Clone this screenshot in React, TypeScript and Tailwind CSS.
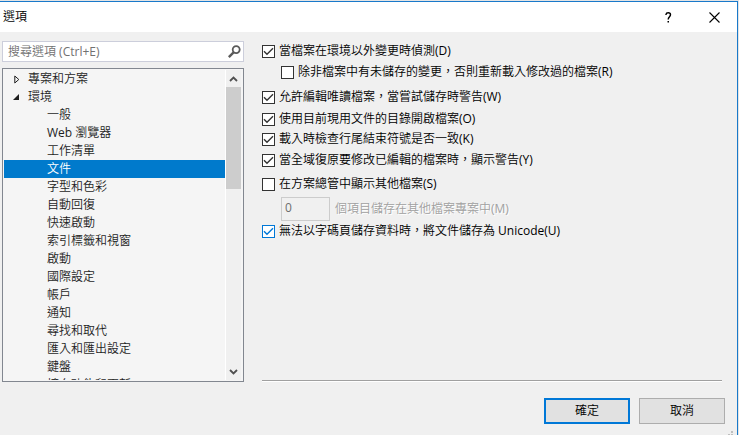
import { useState } from "react";
import clsx from "clsx";

const children = [
  "一般",
  "Web 瀏覽器",
  "工作清單",
  "文件",
  "字型和色彩",
  "自動回復",
  "快速啟動",
  "索引標籤和視窗",
  "啟動",
  "國際設定",
  "帳戶",
  "通知",
  "尋找和取代",
  "匯入和匯出設定",
  "鍵盤",
  "擴充功能和更新",
];

function TitleBar() {
  return (
    <header className="flex h-[30px] items-center bg-white pl-[3px] text-black">
      <h1 className="flex-1 text-xs">選項</h1>
      <button
        type="button"
        aria-label="說明"
        className="flex h-full w-[46px] items-center justify-center"
      >
        <svg width="7" height="11" viewBox="0 0 7 11" fill="none" stroke="#000">
          <path d="M1 3V2.4C1.2 1.2 2 .8 3.2.8C4.6.8 5.5 1.6 5.5 2.8C5.5 4.6 3.2 4.8 3.2 7.4" strokeWidth="1.4" />
          <path d="M2.5 9.8H4" strokeWidth="1.6" />
        </svg>
      </button>
      <button
        type="button"
        aria-label="關閉"
        className="flex h-full w-[46px] items-center justify-center"
      >
        <svg width="11" height="11" viewBox="0 0 11 11" fill="none" stroke="#000" strokeWidth="1.1">
          <path d="M.5.5l10 10M10.5.5l-10 10" />
        </svg>
      </button>
    </header>
  );
}

function SearchBox() {
  return (
    <div className="flex h-[21px] items-center border border-[#cccedb] bg-white pr-0.5 pl-[5px]">
      <input
        type="text"
        aria-label="搜尋選項"
        placeholder="搜尋選項 (Ctrl+E)"
        className="min-w-0 flex-1 bg-transparent text-xs text-[#1e1e1e] outline-none placeholder:text-[#717171]"
      />
      <svg width="13" height="13" viewBox="0 0 13 13" fill="none" stroke="#5a5a5a">
        <circle cx="8.2" cy="4.6" r="3.5" strokeWidth="1.8" />
        <path d="M5.6 7.3L.8 12.1" strokeWidth="2.4" />
      </svg>
    </div>
  );
}

function Tree() {
  const [selected, setSelected] = useState("文件");

  return (
    <div className="flex h-[314px] overflow-hidden border border-[#828790] bg-[#f5f5f5] p-px">
      <ul className="min-w-0 flex-1 overflow-hidden text-xs text-[#1e1e1e]">
        <li className="flex h-[18px] items-center">
          <span className="flex w-6 pl-2.5">
            <svg width="6" height="9" viewBox="0 0 6 9" fill="none" stroke="#1e1e1e">
              <path d="M.8 1L4.8 4.5L.8 8Z" />
            </svg>
          </span>
          專案和方案
        </li>
        <li>
          <div className="flex h-[18px] items-center">
            <span className="flex w-6 pl-[9px]">
              <svg width="6" height="6" viewBox="0 0 6 6" fill="#1e1e1e">
                <path d="M6 0V6H0Z" />
              </svg>
            </span>
            環境
          </div>
          <ul>
            {children.map((name) => (
              <li key={name}>
                <button
                  type="button"
                  onClick={() => setSelected(name)}
                  className={clsx(
                    "block h-[18px] w-full pl-[43px] text-left leading-[18px]",
                    name === selected && "bg-[#007acc] text-white"
                  )}
                >
                  {name}
                </button>
              </li>
            ))}
          </ul>
        </li>
      </ul>
      <div className="mr-px flex w-4 flex-col border-l border-white bg-[#f0f0f0]">
        <button type="button" aria-label="向上捲動" className="flex h-[17px] items-center justify-center">
          <svg width="9" height="6" viewBox="0 0 9 6" fill="none" stroke="#505050" strokeWidth="1.8">
            <path d="M1 5L4.5 1.5L8 5" />
          </svg>
        </button>
        <div className="h-[102px] bg-[#cdcdcd]" />
        <button type="button" aria-label="向下捲動" className="mt-auto flex h-[17px] items-center justify-center">
          <svg width="9" height="6" viewBox="0 0 9 6" fill="none" stroke="#505050" strokeWidth="1.8">
            <path d="M1 1L4.5 4.5L8 1" />
          </svg>
        </button>
      </div>
    </div>
  );
}

function Check({
  label,
  checked,
  active,
  className,
}: {
  label: string;
  checked?: boolean;
  active?: boolean;
  className?: string;
}) {
  return (
    <label className={clsx("flex h-5 items-center gap-1 whitespace-nowrap", className)}>
      <span className={clsx("grid", active ? "text-[#0078d7]" : "text-[#333333]")}>
        <input
          type="checkbox"
          defaultChecked={checked}
          className="peer col-start-1 row-start-1 size-[13px] appearance-none border border-current bg-white"
        />
        <svg
          viewBox="0 0 13 13"
          fill="none"
          stroke="currentColor"
          strokeWidth="1.4"
          className="pointer-events-none invisible col-start-1 row-start-1 size-[13px] peer-checked:visible"
        >
          <path d="M2 6.3L5 9.3L11 3.3" />
        </svg>
      </span>
      {label}
    </label>
  );
}

function DocumentOptions() {
  return (
    <div className="flex flex-col text-xs text-black">
      <Check label="當檔案在環境以外變更時偵測(D)" checked />
      <Check
        label="除非檔案中有未儲存的變更，否則重新載入修改過的檔案(R)"
        className="mt-px ml-[19px]"
      />
      <Check label="允許編輯唯讀檔案，當嘗試儲存時警告(W)" checked className="mt-[5px]" />
      <Check label="使用目前現用文件的目錄開啟檔案(O)" checked className="mt-0.5" />
      <Check label="載入時檢查行尾結束符號是否一致(K)" checked />
      <Check label="當全域復原要修改已編輯的檔案時，顯示警告(Y)" checked className="mt-px" />
      <Check label="在方案總管中顯示其他檔案(S)" className="mt-1" />
      <div className="mt-[3px] ml-[19px] flex h-6 items-center gap-[5px] text-[#a0a0a0]">
        <input
          id="misc-count"
          type="text"
          defaultValue="0"
          disabled
          className="h-6 w-[49px] border border-[#cccccc] bg-[#f0f0f0] px-[3px] pb-1 text-[#6d6d6d]"
        />
        <label htmlFor="misc-count" className="whitespace-nowrap [text-shadow:1px_1px_0_#fff]">
          個項目儲存在其他檔案專案中(M)
        </label>
      </div>
      <Check label="無法以字碼頁儲存資料時，將文件儲存為 Unicode(U)" checked active />
    </div>
  );
}

function App() {
  return (
    <div className="bg-[#e4e4e4] pt-px pr-px font-['Open_Sans','Noto_Sans_CJK_TC_DemiLight','Noto_Sans_CJK_TC_Light','Noto_Sans_CJK_TC',sans-serif]">
      <div className="flex min-h-[calc(100vh-1px)] flex-col border-t border-r border-[#1979ca] bg-[#f0f0f0]">
        <TitleBar />
        <main className="flex gap-[18px] pt-[9px] pr-[15px] pl-0.5">
          <div className="flex w-[242px] shrink-0 flex-col gap-1.5">
            <SearchBox />
            <Tree />
          </div>
          <div className="flex min-w-0 flex-1 flex-col justify-between">
            <DocumentOptions />
            <hr className="border-t border-b border-t-[#a0a0a0] border-b-white" />
          </div>
        </main>
        <footer className="mt-4 flex justify-end gap-[9px] pr-3 text-xs text-black">
          <button type="button" className="h-[26px] w-[86px] border-2 border-[#0078d7] bg-[#e1e1e1]">
            確定
          </button>
          <button type="button" className="h-[26px] w-[86px] border border-[#adadad] bg-[#e1e1e1]">
            取消
          </button>
        </footer>
        <div className="mt-auto flex justify-end pr-1">
          <svg width="5" height="4" viewBox="0 0 5 4" fill="#bfbfbf">
            <path d="M3 0h2v2h-2zM0 3h2v1h-2zM3 3h2v1h-2z" />
          </svg>
        </div>
      </div>
    </div>
  );
}

export default App;
